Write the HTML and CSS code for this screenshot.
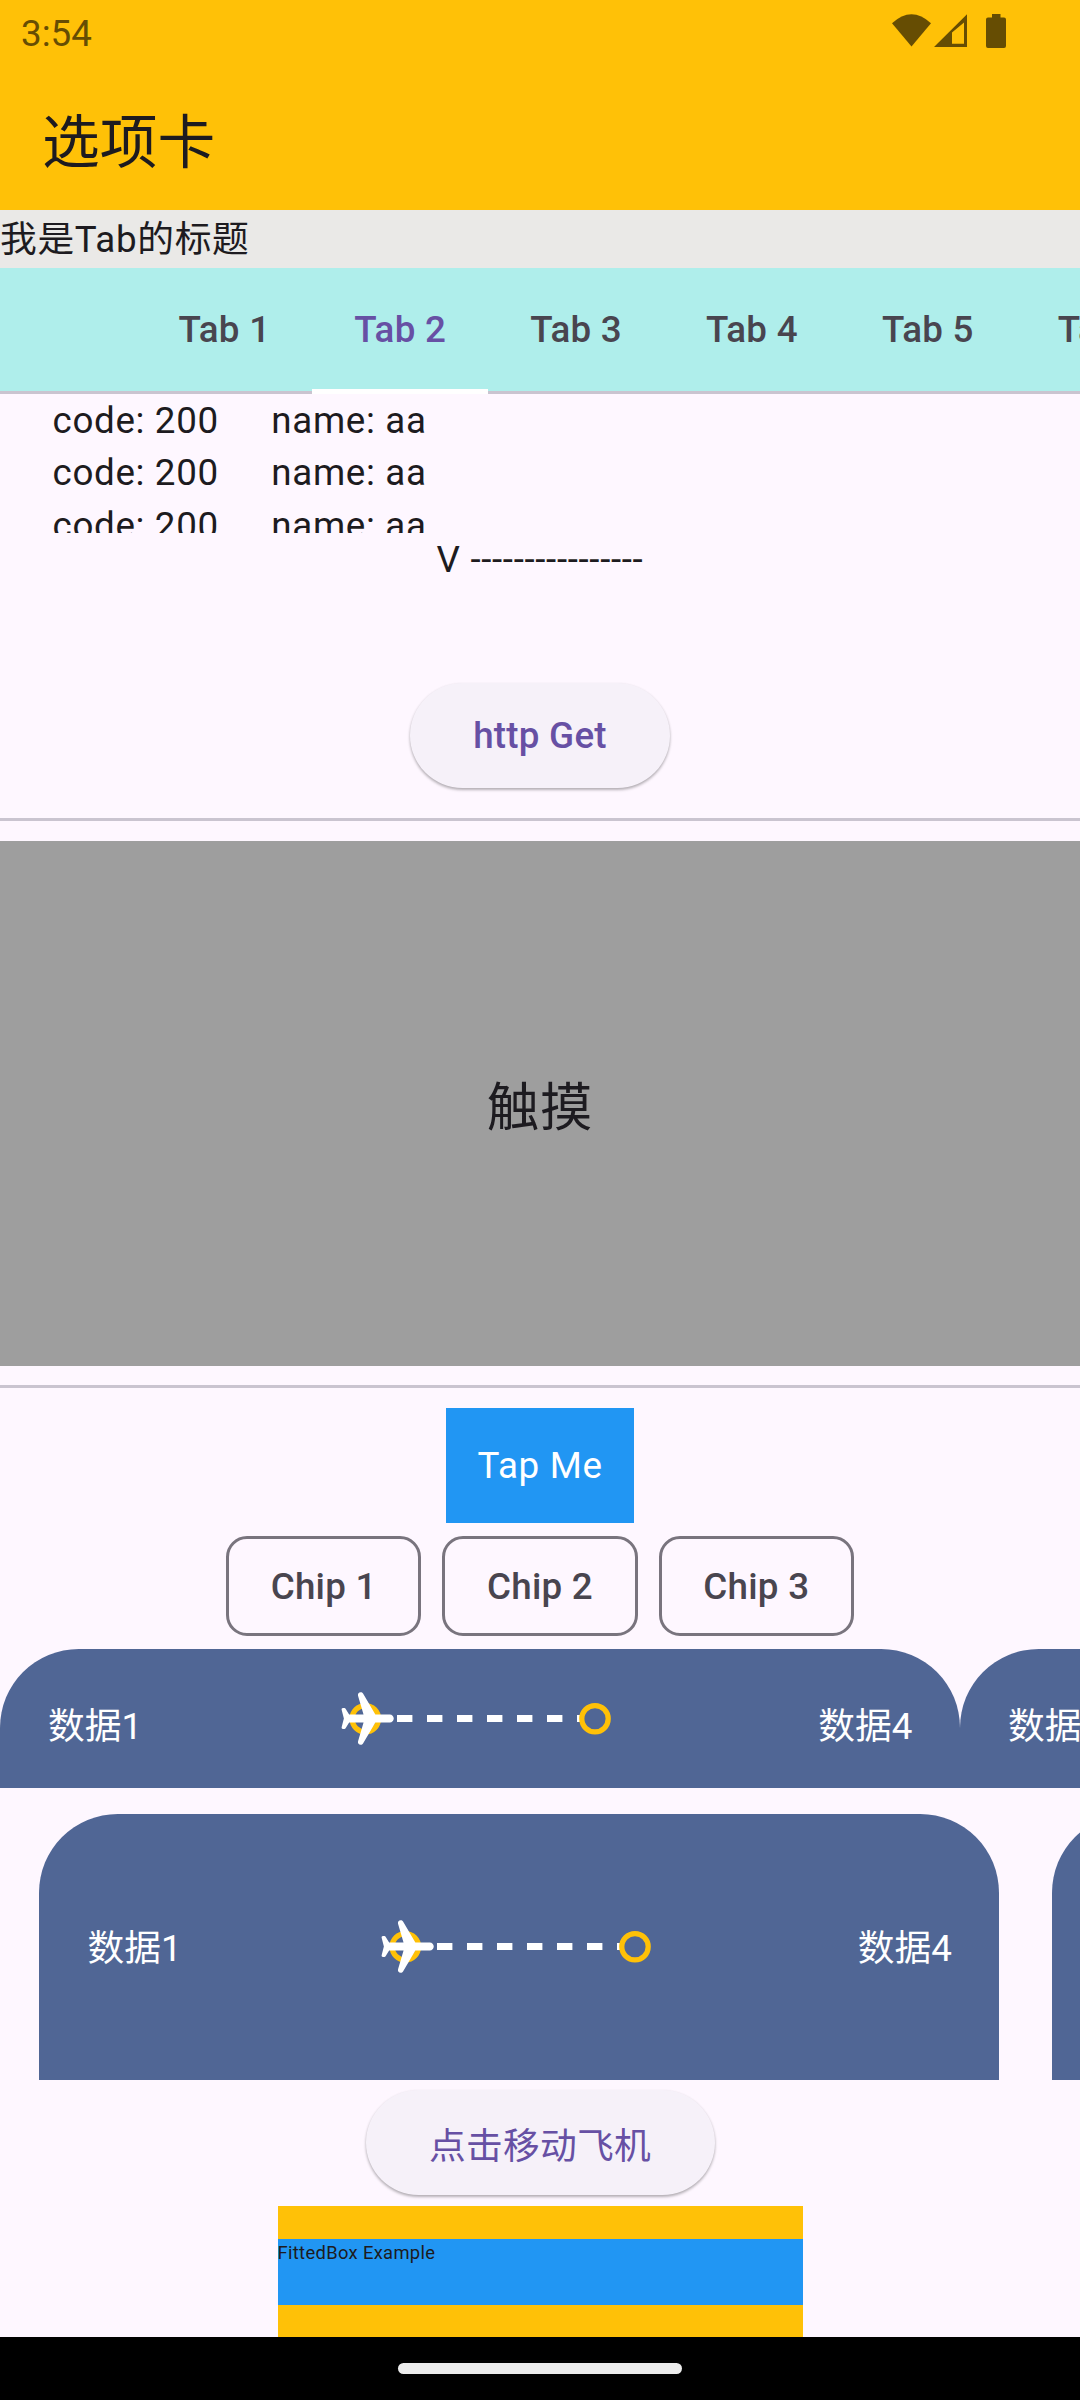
FILE: index.html
```html
<!DOCTYPE html>
<html lang="zh-CN">
<head>
<meta charset="utf-8">
<title>选项卡</title>
<link rel="stylesheet" href="styles.css">
</head>
<body>
<svg class="defs" width="0" height="0" aria-hidden="true">
  <symbol id="track" viewBox="0 0 288 63">
    <path d="M61 31.5H244" stroke="#fff" stroke-width="7" stroke-dasharray="15.4 14.6"/>
    <circle cx="29.3" cy="31.7" r="13.2" fill="none" stroke="#ffc107" stroke-width="5.25"/>
    <circle cx="259" cy="31.7" r="13.2" fill="#506695" stroke="#ffc107" stroke-width="5.25"/>
    <path transform="translate(63 0) rotate(90) scale(2.625)" fill="#fff" d="M21.48 13.7L13.5 9V3.5c0-.83-.67-1.5-1.5-1.5s-1.5.67-1.5 1.5V9l-7.98 4.7c-.32.18-.52.53-.52.9 0 .7.67 1.2 1.34 1.01l7.16-2.1V19l-2.26 1.35c-.15.09-.24.26-.24.43v.58c0 .33.31.57.62.49l2.92-.73L12 21l.38.09.42.11 1.9.48.67.17c.32.08.62-.16.62-.49v-.58c0-.18-.09-.34-.24-.43L13.5 19v-5.5l7.16 2.1c.67.2 1.34-.3 1.34-1 0-.37-.2-.72-.52-.9z"/>
  </symbol>
</svg>
<div class="screen">
  <header class="app-bar">
    <div class="status">
      <span>3:54</span>
      <svg class="status-icons" width="116" height="36" viewBox="890 13 116 36" fill="#664d03">
        <path d="M892 23.2Q911.5 5.200 931 23.200L911.5 46.600Z"/>
        <path fill-rule="evenodd" d="M934 47L967 14.300V47ZM952 32.500V43.800H964V22.500Z"/>
        <path d="M992 14h8.500v3.500h3.500q2 0 2 2v26.500q0 2-2 2h-16q-2 0-2-2V19.500q0-2 2-2h4z"/>
      </svg>
    </div>
    <h1 class="title">选项卡</h1>
  </header>
  <div class="tab-title">我是Tab的标题</div>
  <nav class="tabs">
    <div class="tab">Tab 1</div>
    <div class="tab active">Tab 2</div>
    <div class="tab">Tab 3</div>
    <div class="tab">Tab 4</div>
    <div class="tab">Tab 5</div>
    <div class="tab">Tab 6</div>
  </nav>
  <main class="content">
    <div class="list">
      <div class="row"><span>code: 200</span><span>name: aa</span></div>
      <div class="row"><span>code: 200</span><span>name: aa</span></div>
      <div class="row"><span>code: 200</span><span>name: aa</span></div>
    </div>
    <div class="result">V ----------------</div>
    <button class="pill get">http Get</button>
    <div class="divider"></div>
    <div class="touch">触摸</div>
    <div class="divider"></div>
    <div class="tap">Tap Me</div>
    <div class="chips">
      <div class="chip">Chip 1</div>
      <div class="chip">Chip 2</div>
      <div class="chip">Chip 3</div>
    </div>
    <div class="strip flush">
      <div class="card"><span>数据1</span><svg class="track"><use href="#track"/></svg><span>数据4</span></div>
      <div class="card"><span>数据1</span><svg class="track"><use href="#track"/></svg><span>数据4</span></div>
    </div>
    <div class="strip spaced">
      <div class="card"><span>数据1</span><svg class="track"><use href="#track"/></svg><span>数据4</span></div>
      <div class="card"></div>
    </div>
    <button class="pill move">点击移动飞机</button>
    <div class="fitted"><div class="fitted-inner">FittedBox Example</div></div>
  </main>
  <footer class="nav-bar"><div class="handle"></div></footer>
</div>
</body>
</html>
```
FILE: styles.css
```css
* { box-sizing: border-box; }

body {
  margin: 0;
  background: #fef7ff;
  color: #1d1b20;
  font-family: Roboto, "Noto Sans CJK SC", sans-serif;
  font-size: 36.75px;
  line-height: 52.5px;
  letter-spacing: 0.656px;
}

.defs { display: block; }

.screen {
  display: flex;
  flex-direction: column;
  width: 1080px;
  height: 2400px;
  overflow: hidden;
}

.app-bar {
  flex: none;
  height: 210px;
  background: #ffc107;
}

.status {
  display: flex;
  justify-content: space-between;
  align-items: flex-start;
  height: 63px;
  padding: 8px 74px 0 21px;
  color: #664d03;
  letter-spacing: 0;
}

.status-icons { margin-top: 5px; }

.title {
  margin: 0;
  padding: 40px 42px 0;
  font-size: 57.75px;
  font-weight: 400;
  line-height: 80px;
  letter-spacing: 0;
}

.tab-title {
  flex: none;
  height: 58px;
  padding-top: 1px;
  line-height: 57px;
  background: #eae9e7;
}

.tabs {
  display: flex;
  flex: none;
  height: 126px;
  padding-left: 136.500px;
  background: #afeeeb;
  box-shadow: inset 0 -3px #cac4d0;
  overflow: hidden;
}

.tab {
  flex: none;
  width: 175.850px;
  padding: 0 42px;
  line-height: 124px;
  font-weight: 500;
  letter-spacing: 0.2625px;
  white-space: nowrap;
  color: #49454f;
}

.tab.active {
  color: #6750a4;
  border-bottom: 5px solid #fff;
}

.content {
  display: flex;
  flex: none;
  flex-direction: column;
  align-items: center;
  height: 1943px;
  overflow: hidden;
}

.content > * { flex: none; }

.list {
  width: 100%;
  height: 139px;
  padding: 0.600px 0 0 52.500px;
  overflow: hidden;
}

.row {
  display: flex;
  gap: 52.500px;
}

.result {
  height: 150px;
  padding-top: 1px;
}

.pill {
  height: 105px;
  padding: 0 63px;
  border: 0;
  border-radius: 52.500px;
  background: #f6f1f9;
  box-shadow: 0 2px 3px rgba(0, 0, 0, 0.26), 0 1px 3px rgba(0, 0, 0, 0.08);
  color: #6750a4;
  font: 500 36.75px/52.5px Roboto, "Noto Sans CJK SC", sans-serif;
  letter-spacing: 0.2625px;
}

.get {
  width: 260px;
  margin-bottom: 11px;
  padding: 2px 0 0;
}

.divider {
  width: 100%;
  height: 42px;
  padding-top: 19px;
}

.divider::before {
  content: "";
  display: block;
  height: 3px;
  background: #cac4d0;
}

.touch {
  width: 100%;
  height: 525px;
  background: #9e9e9e;
  font-size: 52.500px;
  line-height: 534px;
  text-align: center;
}

.tap {
  width: 188px;
  height: 115px;
  padding: 32px 0 0;
  background: #2196f3;
  color: #fff;
  text-align: center;
}

.chips {
  display: flex;
  gap: 21px;
  margin: 13px 0;
}

.chip {
  width: 195.300px;
  height: 100px;
  border: 3px solid #79747e;
  border-radius: 21px;
  color: #49454f;
  font-weight: 500;
  line-height: 96px;
  letter-spacing: 0.2625px;
  text-align: center;
}

.strip {
  display: flex;
  width: 100%;
  overflow: hidden;
}

.flush { height: 139px; }

.spaced {
  height: 265.500px;
  margin: 26px 0 10.500px;
  padding-left: 39.400px;
  gap: 52.500px;
}

.card {
  display: flex;
  flex: none;
  justify-content: space-between;
  align-items: center;
  width: 960px;
  padding: 0 47.500px 0 48px;
  border-radius: 78.750px 78.750px 0 0;
  background: #506695;
  color: #fff;
  letter-spacing: 0;
}

.card span { padding-top: 5px; }
.flush .card span { padding-top: 17px; }

.track {
  width: 288px;
  height: 63px;
}

.move {
  width: 349px;
  margin-bottom: 11px;
  padding: 9px 0 0;
  font-weight: 400;
}

.fitted {
  width: 525px;
  height: 131px;
  padding-top: 33px;
  background: #ffc107;
}

.fitted-inner {
  height: 65.600px;
  background: #2196f3;
  font-size: 18.375px;
  line-height: 28px;
  letter-spacing: 0.328px;
}

.nav-bar {
  display: flex;
  flex: none;
  justify-content: center;
  align-items: center;
  height: 63px;
  background: #000;
}

.handle {
  width: 284px;
  height: 11px;
  border-radius: 6px;
  background: #ececec;
}
```
